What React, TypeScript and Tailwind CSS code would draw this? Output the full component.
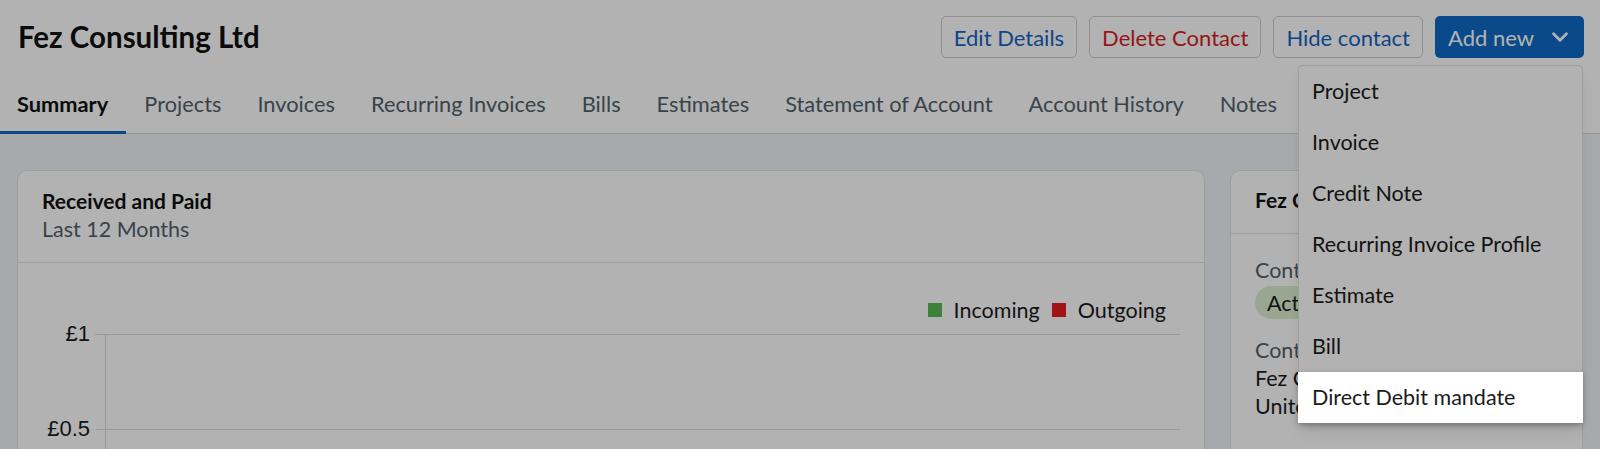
import { ChevronDown } from "lucide-react";

const tabs = [
  "Summary",
  "Projects",
  "Invoices",
  "Recurring Invoices",
  "Bills",
  "Estimates",
  "Statement of Account",
  "Account History",
  "Notes",
];

const menuItems = [
  "Project",
  "Invoice",
  "Credit Note",
  "Recurring Invoice Profile",
  "Estimate",
  "Bill",
];

export default function App() {
  return (
    <div className="relative h-[449px] overflow-hidden bg-[#eff3f8] font-['Lato',sans-serif] text-[#1b1b1b]">
      {/* Header */}
      <header className="bg-white">
        <div className="flex items-center justify-between pl-[18px] pr-4 pt-4">
          <h1 className="text-[29.5px] font-bold leading-none text-[#111]">Fez Consulting Ltd</h1>
          <div className="flex gap-3">
            <button className="h-[42px] rounded-[5px] border border-[#cccccc] bg-white px-3 text-[22px] text-[#1463c4]">
              Edit Details
            </button>
            <button className="h-[42px] rounded-[5px] border border-[#cccccc] bg-white px-3 text-[22px] text-[#d81e26]">
              Delete Contact
            </button>
            <button className="h-[42px] rounded-[5px] border border-[#cccccc] bg-white px-3 text-[22px] text-[#1463c4]">
              Hide contact
            </button>
            <button className="flex h-[42px] w-[149px] items-center justify-between rounded-[5px] bg-[#0f69c6] pl-[13px] pr-[17px] text-[22px] text-white">
              Add new
              <ChevronDown size={26} strokeWidth={2.6} className="-mr-[6px]" />
            </button>
          </div>
        </div>
        <nav className="mt-8 flex border-b border-[#d6dadf]">
          {tabs.map((t, i) => (
            <a
              key={t}
              className={
                i === 0
                  ? "-mb-px border-b-[3px] border-[#0f69c6] pb-[13px] pl-[17px] pr-[18px] text-[21.8px] font-bold leading-7 text-[#111]"
                  : "-mb-px border-b-[3px] border-transparent px-[18px] pb-[13px] text-[21.8px] leading-7 text-[#52616b]"
              }
            >
              {t}
            </a>
          ))}
        </nav>
      </header>

      {/* Content */}
      <main className="flex gap-[25px] px-[17px] pt-9">
        <section className="w-[1188px] shrink-0 rounded-t-[10px] border border-[#dfe3e8] bg-white">
          <div className="border-b border-[#dfe3e8] px-6 pt-4 pb-[19px]">
            <h2 className="text-[21px] font-bold leading-7 text-[#111]">Received and Paid</h2>
            <p className="text-[21.5px] leading-7 text-[#52616b]">Last 12 Months</p>
          </div>
          <div className="pt-[33px]">
            <div className="flex items-center justify-end gap-[12px] pr-[38px] text-[21.5px] leading-7 text-[#1b1b1b]">
              <span className="flex items-center gap-3">
                <span className="h-[14px] w-[14px] bg-[#58b954]" />
                Incoming
              </span>
              <span className="flex items-center gap-3">
                <span className="h-[14px] w-[14px] bg-[#e81c22]" />
                Outgoing
              </span>
            </div>
            <div className="flex gap-[5px] pr-6">
              <div className="flex w-[72px] shrink-0 flex-col items-end font-['Liberation_Sans',sans-serif] text-[22px] leading-5 text-[#1b1b1b]">
                <span>£1</span>
                <span className="mt-[75px]">£0.5</span>
              </div>
              <svg className="h-[125px] flex-1" preserveAspectRatio="none">
                <line x1="0" x2="100%" y1="10.5" y2="10.5" stroke="#dcdcdc" strokeWidth="1" />
                <line x1="0" x2="100%" y1="105.5" y2="105.5" stroke="#dcdcdc" strokeWidth="1" />
                <line x1="10.5" x2="10.5" y1="10" y2="125" stroke="#dcdcdc" strokeWidth="1" />
              </svg>
            </div>
          </div>
        </section>

        <section className="flex-1 rounded-t-[10px] border border-[#dfe3e8] bg-white">
          <div className="border-b border-[#dfe3e8] px-6 pt-[15px] pb-[19px]">
            <h2 className="whitespace-nowrap text-[21px] font-bold leading-7 text-[#111]">Fez Consulting Ltd</h2>
          </div>
          <div className="px-6 pt-[22px] text-[21.5px] leading-7">
            <p className="text-[#52616b]">Contact Status</p>
            <span className="mt-[2px] inline-flex h-[33px] items-center rounded-full bg-[#dcf0d0] px-3 text-[#1b1b1b]">
              Active
            </span>
            <p className="mt-[17px] text-[#52616b]">Contact Details</p>
            <p>Fez Consulting Ltd</p>
            <p>United Kingdom</p>
          </div>
        </section>
      </main>

      {/* Add new menu (sits under the dimming layer) */}
      <div className="absolute top-[65px] right-[17px] w-[285px] rounded-[4px] border border-[#e2e2e2] bg-white shadow-lg">
        {menuItems.map((m) => (
          <div key={m} className="flex h-[51px] items-center px-[13px] text-[21.5px] text-[#1b1b1b]">
            {m}
          </div>
        ))}
        <div className="relative z-10 -mx-px flex h-[51px] items-center bg-white px-[14px] text-[21.5px] text-[#1b1b1b] shadow-[0_2px_6px_rgba(0,0,0,0.25)]">
          Direct Debit mandate
        </div>
      </div>

      {/* Dimming layer */}
      <div className="pointer-events-none absolute inset-0 bg-black/30" />
    </div>
  );
}
